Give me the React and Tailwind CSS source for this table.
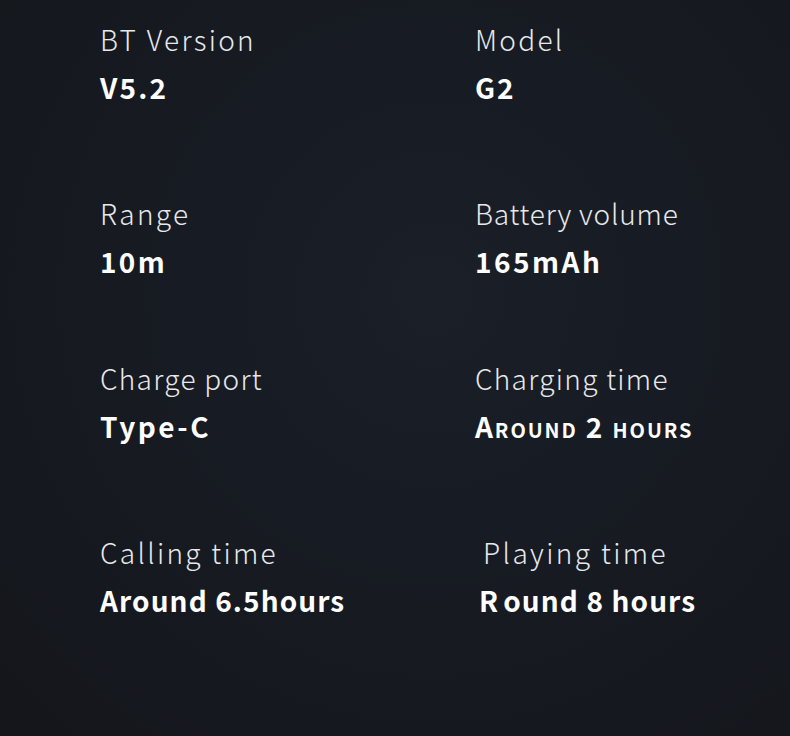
const specs = [
  [
    { label: 'BT Version', value: 'V5.2', lt: 'tracking-[2.3px]', vt: 'tracking-[2.2px]' },
    { label: 'Model', value: 'G2', lt: 'tracking-[2.3px]', vt: 'tracking-[2px]' },
  ],
  [
    { label: 'Range', value: '10m', lt: 'tracking-[2.3px]', vt: 'tracking-[2.3px]' },
    { label: 'Battery volume', value: '165mAh', lt: 'tracking-[0.8px]', vt: 'tracking-[2.5px]' },
  ],
  [
    { label: 'Charge port', value: 'Type-C', lt: 'tracking-[1.3px]', vt: 'tracking-[2.5px]' },
    { label: 'Charging time', value: 'Around 2 hours', lt: 'tracking-[1.3px]', vt: 'tracking-[1.9px]', smallCaps: true },
  ],
  [
    { label: 'Calling time', value: 'Around 6.5hours', lt: 'tracking-[2.3px]', vt: 'tracking-[1.1px]' },
    { label: 'Playing time', value: 'Round 8 hours', lt: 'tracking-[2.4px]', vt: 'tracking-[1.1px]', shift: true },
  ],
];

const rowGap = ['mt-0', 'mt-[92px]', 'mt-[83px]', 'mt-[92px]'];

function Spec({ label, value, lt, vt, smallCaps, shift }) {
  return (
    <div className={shift ? 'pl-[4px]' : ''}>
      <p className={`text-[28px] leading-[34px] font-light text-[#e8e9eb] ${lt} ${shift ? 'pl-[4px]' : ''}`}>
        {label}
      </p>
      <p
        className={`mt-[14px] text-[28px] leading-[34px] font-bold text-white ${vt} ${
          smallCaps ? '[font-variant-caps:small-caps]' : ''
        }`}
      >
        {shift ? (
          <>
            <span className="mr-[4px]">R</span>ound 8 hours
          </>
        ) : (
          value
        )}
      </p>
    </div>
  );
}

export default function App() {
  return (
    <div
      className="h-[736px] w-full overflow-hidden bg-[radial-gradient(ellipse_at_55%_40%,#1a1f28_0%,#171b23_40%,#14161b_100%)] pl-[100px] pt-[22px]"
      style={{ fontFamily: '"Noto Sans CJK SC", "Noto Sans", sans-serif' }}
    >
      {specs.map((row, i) => (
        <div key={i} className={`grid grid-cols-[375px_1fr] ${rowGap[i]}`}>
          {row.map((s) => (
            <Spec key={s.label} {...s} />
          ))}
        </div>
      ))}
    </div>
  );
}
